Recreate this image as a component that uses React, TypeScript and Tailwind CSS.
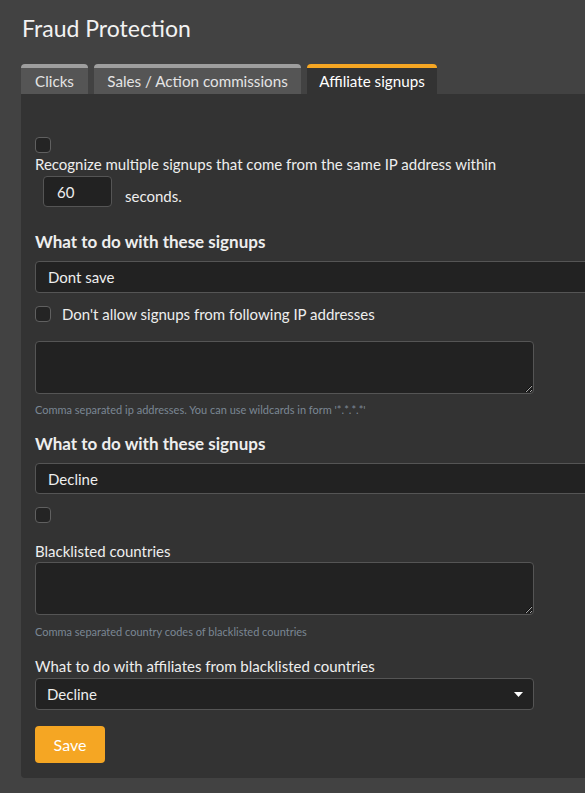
import { useState } from "react";

const font = { fontFamily: "Lato, 'Open Sans', sans-serif" };

function Checkbox() {
  return <span className="block w-[16px] h-[16px] rounded-[4px] bg-[#242424] border border-[#606060] shrink-0" />;
}

function Hint({ children }: { children: React.ReactNode }) {
  return <div className="text-[11px] leading-[12px] text-[#7b8794]">{children}</div>;
}

export default function App() {
  const [tab] = useState("signups");
  const tabs = [
    { id: "clicks", name: "Clicks", w: "w-[67px]" },
    { id: "sales", name: "Sales / Action commissions", w: "w-[207px]" },
    { id: "signups", name: "Affiliate signups", w: "w-[130px]" },
  ];

  return (
    <div className="w-[585px] h-[793px] overflow-hidden bg-[#424242] text-[#eeeeee]" style={font}>
      <h1 className="pl-[22px] pt-[14px] text-[23px] leading-[28px] text-[#f2f2f2]">Fraud Protection</h1>

      {/* Tabs */}
      <div className="flex gap-[6px] ml-[21px] mt-[22px]">
        {tabs.map((t) => (
          <div
            key={t.id}
            className={`${t.w} h-[30px] rounded-t-[4px] border-t-[4px] flex items-center justify-center text-[15.2px] ${
              tab === t.id ? "bg-[#333333] border-[#f5a623] text-white" : "bg-[#555555] border-[#9e9e9e] text-[#e4e4e4]"
            }`}
          >
            {t.name}
          </div>
        ))}
      </div>

      {/* Panel */}
      <div className="ml-[21px] w-[600px] bg-[#333333] rounded-b-[4px] pl-[14px] pt-[43px] pb-[15px] text-[15px] leading-[20px]">
        <Checkbox />
        <div className="mt-[1px]">Recognize multiple signups that come from the same IP address within</div>
        <div className="flex items-end mt-[2px] ml-[8px]">
          <div className="w-[69px] h-[31px] rounded-[4px] bg-[#222222] border border-[#555555] pl-[13px] flex items-center">60</div>
          <span className="ml-[13px] mb-[1px]">seconds.</span>
        </div>

        <div className="mt-[25px] font-bold text-[17px]">What to do with these signups</div>
        <div className="mt-[9px] w-[570px] h-[32px] bg-[#222222] border border-[#555555] rounded-[4px] pl-[12px] flex items-center">Dont save</div>

        <div className="mt-[11px] flex items-center">
          <Checkbox />
          <span className="ml-[11px]">Don't allow signups from following IP addresses</span>
        </div>
        <textarea className="block mt-[17px] w-[499px] h-[53px] bg-[#222222] border border-[#555555] rounded-[4px] outline-none" />
        <div className="mt-[10px]">
          <Hint>Comma separated ip addresses. You can use wildcards in form '*.*.*.*'</Hint>
        </div>

        <div className="mt-[18px] font-bold text-[17px]">What to do with these signups</div>
        <div className="mt-[9px] w-[570px] h-[31px] bg-[#222222] border border-[#555555] rounded-[4px] pl-[12px] flex items-center">Decline</div>

        <div className="mt-[13px]">
          <Checkbox />
        </div>
        <div className="mt-[18px]">Blacklisted countries</div>
        <textarea className="block mt-[1px] w-[499px] h-[53px] bg-[#222222] border border-[#555555] rounded-[4px] outline-none" />
        <div className="mt-[11px]">
          <Hint>Comma separated country codes of blacklisted countries</Hint>
        </div>

        <div className="mt-[18px]">What to do with affiliates from blacklisted countries</div>
        <div className="mt-[2px] w-[499px] h-[32px] bg-[#222222] border border-[#555555] rounded-[4px] pl-[11px] pr-[10px] flex items-center justify-between">
          <span>Decline</span>
          <svg width="9" height="5" viewBox="0 0 9 5">
            <path d="M0 0h9L4.5 5z" fill="#ffffff" />
          </svg>
        </div>

        <button className="block mt-[16px] w-[70px] h-[37px] bg-[#f5a623] rounded-[4px] text-white text-[16px]">Save</button>
      </div>
    </div>
  );
}
